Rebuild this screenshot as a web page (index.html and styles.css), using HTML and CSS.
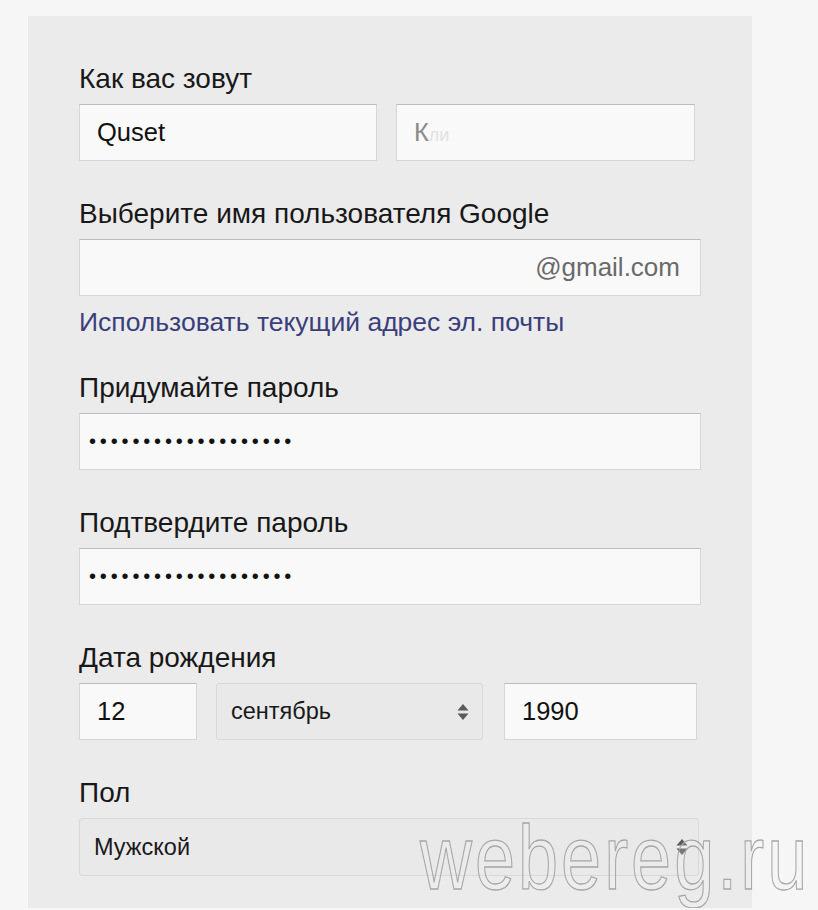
FILE: index.html
```html
<!DOCTYPE html>
<html lang="ru">
<head>
<meta charset="utf-8">
<title>Регистрация</title>
<link rel="stylesheet" href="styles.css">
</head>
<body>
<div class="panel">
  <div class="label">Как вас зовут</div>
  <div class="row">
    <div class="input w-name">Quset</div>
    <div class="input w-name2"><span class="faint1">К</span><span class="faint2">ли</span></div>
  </div>

  <div class="label gap">Выберите имя пользователя Google</div>
  <div class="input w-full gmail"><span class="suffix">@gmail.com</span></div>
  <div class="link">Использовать текущий адрес эл. почты</div>

  <div class="label gap2">Придумайте пароль</div>
  <div class="input w-full pass">•••••••••••••••••••</div>

  <div class="label gap">Подтвердите пароль</div>
  <div class="input w-full pass">•••••••••••••••••••</div>

  <div class="label gap">Дата рождения</div>
  <div class="row date">
    <div class="input w-day">12</div>
    <div class="select w-month">
      <span class="sel-text">сентябрь</span>
      <svg class="arrows" width="12" height="20" viewBox="0 0 12 20"><path d="M6 2 L11.5 8.5 H0.5 Z" fill="#5a5a5a"/><path d="M0.5 11.5 H11.5 L6 18 Z" fill="#5a5a5a"/></svg>
    </div>
    <div class="input w-year">1990</div>
  </div>

  <div class="label gap">Пол</div>
  <div class="select w-gender">
    <span class="sel-text">Мужской</span>
    <svg class="arrows" width="12" height="20" viewBox="0 0 12 20"><path d="M6 2 L11.5 8.5 H0.5 Z" fill="#5a5a5a"/><path d="M0.5 11.5 H11.5 L6 18 Z" fill="#5a5a5a"/></svg>
  </div>

  <div class="watermark">webereg.ru</div>
</div>
</body>
</html>
```
FILE: styles.css
```css
html, body {
  margin: 0;
  padding: 0;
}
body {
  background: #f6f6f6;
  font-family: "Liberation Sans", Arial, sans-serif;
  color: #1e1e1e;
}
.panel {
  position: relative;
  margin: 16px 0 0 28px;
  width: 724px;
  height: 892px;
  box-sizing: border-box;
  padding: 49px 0 0 51px;
  background: #ebebeb;
}
.label {
  font-size: 28px;
  line-height: 28px;
  height: 28px;
  margin-bottom: 11px;
  color: #181818;
  white-space: nowrap;
}
.label.gap { margin-top: 39px; }
.label.gap2 { margin-top: 38px; }
.row {
  display: flex;
  gap: 19px;
}
.input {
  box-sizing: border-box;
  height: 57px;
  background: #f9f9f9;
  border: 1px solid #d6d6d6;
  border-top-color: #bdbdbd;
  font-size: 25.5px;
  line-height: 55px;
  padding-left: 17px;
  color: #111;
  white-space: nowrap;
  overflow: hidden;
}
.w-name { width: 298px; }
.w-name2 { width: 299px; }
.w-full { width: 622px; }
.w-day { width: 118px; }
.w-year { width: 193px; margin-left: 2px; }
.faint1 { color: #8a8a8a; }
.faint2 { color: #e2e2e2; font-size: 18px; }
.gmail {
  display: flex;
  justify-content: flex-end;
  padding-right: 20px;
}
.suffix {
  color: #6a6a6a;
  font-size: 26px;
}
.link {
  margin-top: 12px;
  font-size: 26.5px;
  line-height: 28px;
  color: #3a3f7c;
  white-space: nowrap;
}
.pass {
  font-size: 20px;
  letter-spacing: 3.85px;
  padding-left: 9px;
  color: #111;
}
.select {
  box-sizing: border-box;
  height: 57px;
  background: #e9e9e9;
  border: 1px solid #d8d8d8;
  border-radius: 3px;
  display: flex;
  align-items: center;
  justify-content: space-between;
}
.w-month { width: 267px; padding: 0 13px 0 14px; }
.w-gender { width: 620px; height: 58px; padding: 0 10px 0 14px; }
.sel-text {
  font-size: 23.5px;
  color: #1a1a1a;
  white-space: nowrap;
}
.arrows { display: block; }
.watermark {
  position: absolute;
  left: 392px;
  top: 812px;
  font-size: 72px;
  line-height: 80px;
  letter-spacing: 3px;
  color: rgba(246, 246, 246, 0.2);
  -webkit-text-stroke: 1px #a6a6a6;
  transform: scaleY(1.27);
  transform-origin: left bottom;
  white-space: nowrap;
  pointer-events: none;
}
```
